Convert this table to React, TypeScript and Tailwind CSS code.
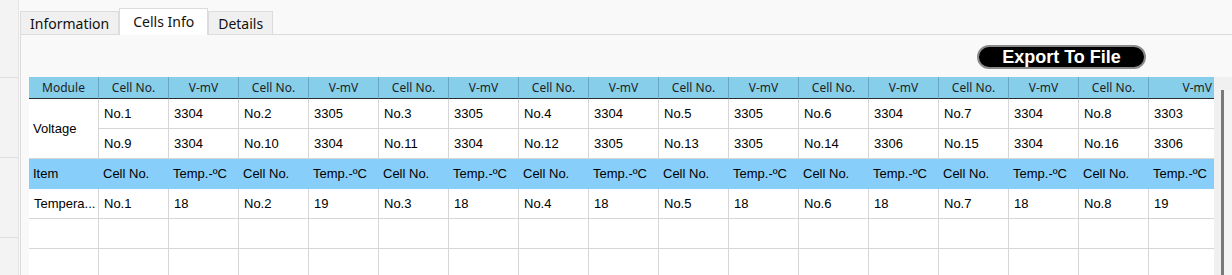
import React from 'react'

const voltageRows = [
  [
    ['No.1', '3304'], ['No.2', '3305'], ['No.3', '3305'], ['No.4', '3304'],
    ['No.5', '3305'], ['No.6', '3304'], ['No.7', '3304'], ['No.8', '3303']
  ],
  [
    ['No.9', '3304'], ['No.10', '3304'], ['No.11', '3304'], ['No.12', '3305'],
    ['No.13', '3305'], ['No.14', '3306'], ['No.15', '3304'], ['No.16', '3306']
  ]
]

const temps = [
  ['No.1', '18'], ['No.2', '19'], ['No.3', '18'], ['No.4', '18'],
  ['No.5', '18'], ['No.6', '18'], ['No.7', '18'], ['No.8', '19']
]

const headerCell =
  "flex h-[22px] items-center justify-center border-r border-b border-r-[#6aa7c4] border-b-[#2b2b2b] bg-[#87ceeb] font-['Noto_Sans',sans-serif] text-[12px] text-[#1e1e1e]"
const bodyCell =
  'flex h-[30px] items-center overflow-hidden border-r border-b border-[#d6d6d6] bg-white pl-[5px] text-[13px] whitespace-nowrap'
const itemCell = 'flex h-[30px] items-center bg-[#87cefa] pl-[4px] text-[13px]'

function Tab({ label, active }: { label: string; active?: boolean }) {
  if (active) {
    return (
      <div className="relative z-10 -mb-px flex h-[27px] w-[89px] items-center justify-center border border-b-0 border-[#dcdcdc] bg-white pb-[1px]">
        {label}
      </div>
    )
  }
  return (
    <div className="flex h-[23px] items-center border border-b-0 border-[#dcdcdc] bg-[#f0f0f0] px-[9px]">
      {label}
    </div>
  )
}

export default function App() {
  return (
    <div className="flex h-[275px] w-[1232px] overflow-hidden bg-[#f9f9f9] font-['Liberation_Sans',Arial,sans-serif] text-black">
      <div className="flex w-[19px] shrink-0 flex-col border-r border-[#e4e4e4] bg-[#f3f3f3]">
        <div className="h-[78px] border-b border-[#dedede]" />
        <div className="h-[80px] border-b border-[#dedede]" />
        <div className="h-[80px] border-b border-[#dedede]" />
      </div>
      <div className="flex flex-1 flex-col pl-px">
        <div className="flex h-[35px] shrink-0 items-end border-b border-[#dcdcdc] font-['Noto_Sans',sans-serif] text-[14px] text-[#111]">
          <Tab label="Information" />
          <Tab label="Cells Info" active />
          <Tab label="Details" />
        </div>
        <div className="flex flex-1 flex-col border-l border-[#dcdcdc]">
          <div className="flex h-[42px] shrink-0 items-end justify-end pr-[86px] pb-[8px]">
            <button className="flex h-[24px] w-[169px] items-center justify-center rounded-full border-2 border-[#8a8a8a] bg-black text-[18px] font-bold text-white">
              Export To File
            </button>
          </div>
          <div className="flex flex-1 pl-[8px]">
            <div className="grid grid-cols-[repeat(16,70px)_65px] content-start">
              <div className={headerCell}>Module</div>
              {Array.from({ length: 8 }).map((_, i) => (
                <React.Fragment key={i}>
                  <div className={headerCell}>Cell No.</div>
                  <div
                    className={
                      i === 7
                        ? headerCell + ' justify-end! border-r-0 pr-[2px]'
                        : headerCell
                    }
                  >
                    V-mV
                  </div>
                </React.Fragment>
              ))}

              <div className="row-span-2 flex items-center border-r border-b border-[#d6d6d6] bg-white pl-[4px] text-[13px]">
                Voltage
              </div>
              {voltageRows.map((row, r) =>
                row.map(([cell, v], i) => (
                  <React.Fragment key={r + '-' + i}>
                    <div className={bodyCell}>{cell}</div>
                    <div className={i === 7 ? bodyCell + ' border-r-0' : bodyCell}>{v}</div>
                  </React.Fragment>
                ))
              )}

              <div className={itemCell + ' pl-[2px]'}>Item</div>
              {Array.from({ length: 8 }).map((_, i) => (
                <React.Fragment key={i}>
                  <div className={itemCell}>Cell No.</div>
                  <div className={itemCell}>Temp.-ºC</div>
                </React.Fragment>
              ))}

              <div className={bodyCell + ' pl-[2px]'}>Tempera...</div>
              {temps.map(([cell, t], i) => (
                <React.Fragment key={i}>
                  <div className={bodyCell}>{cell}</div>
                  <div className={i === 7 ? bodyCell + ' border-r-0' : bodyCell}>{t}</div>
                </React.Fragment>
              ))}

              {Array.from({ length: 34 }).map((_, i) => (
                <div
                  key={i}
                  className={
                    i % 17 === 16 ? bodyCell + ' border-r-0' : bodyCell
                  }
                />
              ))}
            </div>
            <div className="flex flex-1 bg-[#f0f0f0] pt-[13px] pl-[7px]">
              <div className="w-[3px] bg-[#7a7a7a]" />
              <div className="flex-1 bg-[#f4f4f4]" />
            </div>
          </div>
        </div>
      </div>
    </div>
  )
}
